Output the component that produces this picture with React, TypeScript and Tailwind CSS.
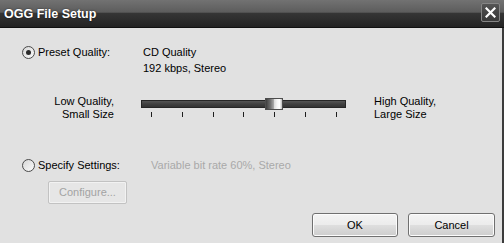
import React from "react";

function Radio({ checked }: { checked?: boolean }) {
  return (
    <div className="w-[13px] h-[13px] rounded-full border border-[#4a4a4a] bg-[linear-gradient(135deg,#d6d6d6,#fbfbfb)] flex items-center justify-center shrink-0">
      {checked && <div className="w-[5px] h-[5px] rounded-full bg-[#2a2a2a]" />}
    </div>
  );
}

function Button({ label, width }: { label: string; width: string }) {
  return (
    <div
      className={`${width} h-[24px] rounded-[3px] border border-[#707070] bg-[linear-gradient(to_bottom,#f4f4f4_0%,#ececec_48%,#dedede_52%,#cdcdcd_100%)] shadow-[inset_0_0_0_1px_#fcfcfc] flex items-center justify-center text-black`}
    >
      {label}
    </div>
  );
}

export default function App() {
  const ticks = [0, 1, 2, 3, 4, 5, 6];
  return (
    <div
      className="w-[504px] h-[243px] flex flex-col bg-[#e1e1e1] text-[11px] leading-[13px] text-black overflow-hidden"
      style={{ fontFamily: '"Liberation Sans", Arial, sans-serif' }}
    >
      {/* Title bar */}
      <div className="h-[28px] shrink-0 border-b border-[#111] bg-[linear-gradient(to_bottom,#727272_0%,#5c5c5c_46%,#363636_47%,#232323_100%)] flex items-center justify-between pl-[4px] pr-[4px]">
        <span className="text-white font-bold text-[12.5px] leading-[16px] mt-[1px] [text-shadow:0_0_2px_rgba(0,0,0,0.6)]">
          OGG File Setup
        </span>
        <div className="w-[19px] h-[19px] mb-[3px] rounded-[2px] border border-[#858585] bg-[linear-gradient(to_bottom,#555_0%,#444_50%,#3a3a3a_100%)] flex items-center justify-center">
          <svg width="11" height="11" viewBox="0 0 11 11">
            <path d="M1.5 1.5 L9.5 9.5 M9.5 1.5 L1.5 9.5" stroke="#ffffff" strokeWidth="2.2" strokeLinecap="square" />
          </svg>
        </div>
      </div>

      {/* Body */}
      <div className="flex-1 flex flex-col pl-[22px] pr-[7px] border-r-[2px] border-[#3c3c3c]">
        {/* Preset row */}
        <div className="mt-[18px] h-[13px] flex items-center">
          <Radio checked />
          <span className="ml-[3px] w-[105px]">Preset Quality:</span>
          <span>CD Quality</span>
        </div>
        <div className="mt-[3px] h-[13px] ml-[121px]">192 kbps, Stereo</div>

        {/* Slider row */}
        <div className="mt-[20px] flex">
          <div className="w-[92px] text-right">
            <div>Low Quality,</div>
            <div>Small Size</div>
          </div>
          <div className="relative ml-[27px] w-[205px] h-[26px]">
            <div className="mt-[5px] h-[8px] border border-[#262626] bg-[linear-gradient(to_bottom,#555_0%,#404040_50%,#333_100%)]" />
            <div className="mt-[4px] ml-[10px] w-[186px] h-[5px] flex justify-between">
              {ticks.map((t) => (
                <div key={t} className="w-[1px] h-[5px] bg-[#1e1e1e]" />
              ))}
            </div>
            <div className="absolute top-[3px] left-[124px] w-[18px] h-[12px] border border-[#4d4d4d] bg-[linear-gradient(to_right,#3e3e3e_0%,#6a6a6a_25%,#a9a9a9_48%,#dcdcdc_52%,#f7f7f7_70%,#ffffff_85%,#bcbcbc_100%)]" />
          </div>
          <div className="ml-[28px]">
            <div>High Quality,</div>
            <div>Large Size</div>
          </div>
        </div>

        {/* Specify row */}
        <div className="mt-[38px] h-[13px] flex items-center">
          <Radio />
          <span className="ml-[3px] w-[113px]">Specify Settings:</span>
          <span className="text-[#a9a9a9]">Variable bit rate 60%, Stereo</span>
        </div>

        <div className="mt-[9px] ml-[26px] w-[79px] h-[23px] rounded-[2px] border border-[#c2c2c2] shadow-[inset_0_0_0_1px_#f2f2f2] bg-[#e6e6e6] flex items-center justify-center text-[#a3a3a3]">
          Configure...
        </div>

        <div className="mt-[9px] flex justify-end gap-[10px]">
          <Button label="OK" width="w-[86px]" />
          <Button label="Cancel" width="w-[87px]" />
        </div>
      </div>
    </div>
  );
}
